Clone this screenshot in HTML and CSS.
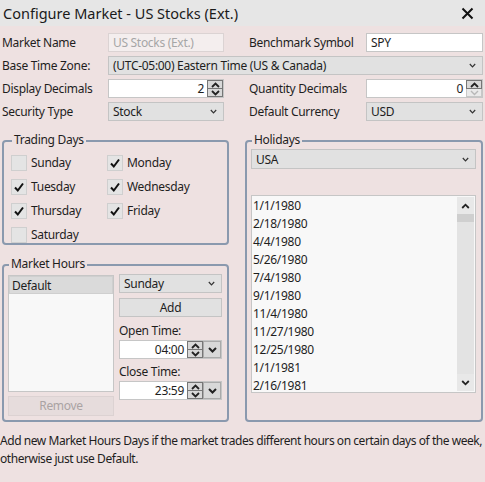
FILE: index.html
```html
<!DOCTYPE html>
<html lang="en">
<head>
    <meta charset="UTF-8">
    <title>Configure Market</title>
    <link rel="stylesheet" href="styles.css">
</head>
<body>

<div class="titlebar">
    <span class="title">Configure Market - US Stocks (Ext.)</span>
    <svg class="close" width="13" height="13" viewBox="0 0 13 13">
        <path d="M1.5 1.5 L11.5 11.5 M11.5 1.5 L1.5 11.5" stroke="#111" stroke-width="2" fill="none"/>
    </svg>
</div>

<div class="settings">
    <span class="lbl">Market Name</span>
    <div class="field text disabled">US Stocks (Ext.)</div>
    <span class="lbl col4">Benchmark Symbol</span>
    <div class="field text">SPY</div>

    <span class="lbl">Base Time Zone:</span>
    <div class="field combo wide">
        <span>(UTC-05:00) Eastern Time (US &amp; Canada)</span>
        <svg class="chev" width="7" height="5" viewBox="0 0 7 5"><path d="M0.8 1 L3.5 3.8 L6.2 1" stroke="#333" stroke-width="1.2" fill="none"/></svg>
    </div>

    <span class="lbl">Display Decimals</span>
    <div class="field num">
        <span class="val">2</span>
        <div class="spin">
            <span class="up"><svg width="9" height="6" viewBox="0 0 9 6"><path d="M1 5 L4.5 1.5 L8 5" stroke="#222" stroke-width="1.8" fill="none"/></svg></span>
            <span class="down"><svg width="9" height="6" viewBox="0 0 9 6"><path d="M1 1 L4.5 4.5 L8 1" stroke="#222" stroke-width="1.8" fill="none"/></svg></span>
        </div>
    </div>
    <span class="lbl col4">Quantity Decimals</span>
    <div class="field num">
        <span class="val">0</span>
        <div class="spin">
            <span class="up"><svg width="9" height="6" viewBox="0 0 9 6"><path d="M1 5 L4.5 1.5 L8 5" stroke="#222" stroke-width="1.8" fill="none"/></svg></span>
            <span class="down off"><svg width="9" height="6" viewBox="0 0 9 6"><path d="M1 1 L4.5 4.5 L8 1" stroke="#b8b8b8" stroke-width="1.4" fill="none"/></svg></span>
        </div>
    </div>

    <span class="lbl">Security Type</span>
    <div class="field combo">
        <span>Stock</span>
        <svg class="chev" width="7" height="5" viewBox="0 0 7 5"><path d="M0.8 1 L3.5 3.8 L6.2 1" stroke="#333" stroke-width="1.2" fill="none"/></svg>
    </div>
    <span class="lbl col4">Default Currency</span>
    <div class="field combo">
        <span>USD</span>
        <svg class="chev" width="7" height="5" viewBox="0 0 7 5"><path d="M0.8 1 L3.5 3.8 L6.2 1" stroke="#333" stroke-width="1.2" fill="none"/></svg>
    </div>
</div>

<div class="groups">
    <div class="left-col">
        <fieldset class="group trading">
            <legend>Trading Days</legend>
            <div class="days">
                <div class="day"><span class="box"></span>Sunday</div>
                <div class="day"><span class="box"><svg width="14" height="14" viewBox="0 0 14 14"><path d="M3 7.5 L5.8 10.5 L11 3.5" stroke="#111" stroke-width="2" fill="none"/></svg></span>Monday</div>
                <div class="day"><span class="box"><svg width="14" height="14" viewBox="0 0 14 14"><path d="M3 7.5 L5.8 10.5 L11 3.5" stroke="#111" stroke-width="2" fill="none"/></svg></span>Tuesday</div>
                <div class="day"><span class="box"><svg width="14" height="14" viewBox="0 0 14 14"><path d="M3 7.5 L5.8 10.5 L11 3.5" stroke="#111" stroke-width="2" fill="none"/></svg></span>Wednesday</div>
                <div class="day"><span class="box"><svg width="14" height="14" viewBox="0 0 14 14"><path d="M3 7.5 L5.8 10.5 L11 3.5" stroke="#111" stroke-width="2" fill="none"/></svg></span>Thursday</div>
                <div class="day"><span class="box"><svg width="14" height="14" viewBox="0 0 14 14"><path d="M3 7.5 L5.8 10.5 L11 3.5" stroke="#111" stroke-width="2" fill="none"/></svg></span>Friday</div>
                <div class="day"><span class="box"></span>Saturday</div>
            </div>
        </fieldset>

        <fieldset class="group hours">
            <legend>Market Hours</legend>
            <div class="hours-body">
                <div class="hours-left">
                    <div class="listbox">
                        <div class="item selected">Default</div>
                    </div>
                    <div class="btn disabled">Remove</div>
                </div>
                <div class="hours-right">
                    <div class="combo">
                        <span>Sunday</span>
                        <svg class="chev" width="7" height="5" viewBox="0 0 7 5"><path d="M0.8 1 L3.5 3.8 L6.2 1" stroke="#333" stroke-width="1.2" fill="none"/></svg>
                    </div>
                    <div class="btn add">Add</div>
                    <div class="time-lbl">Open Time:</div>
                    <div class="time">
                        <span class="val">04:00</span>
                        <div class="spin">
                            <span class="up"><svg width="9" height="6" viewBox="0 0 9 6"><path d="M1 5 L4.5 1.5 L8 5" stroke="#222" stroke-width="1.8" fill="none"/></svg></span>
                            <span class="down"><svg width="9" height="6" viewBox="0 0 9 6"><path d="M1 1 L4.5 4.5 L8 1" stroke="#222" stroke-width="1.8" fill="none"/></svg></span>
                        </div>
                        <span class="drop"><svg width="9" height="6" viewBox="0 0 9 6"><path d="M1 1 L4.5 4.5 L8 1" stroke="#222" stroke-width="2" fill="none"/></svg></span>
                    </div>
                    <div class="time-lbl close-lbl">Close Time:</div>
                    <div class="time">
                        <span class="val">23:59</span>
                        <div class="spin">
                            <span class="up"><svg width="9" height="6" viewBox="0 0 9 6"><path d="M1 5 L4.5 1.5 L8 5" stroke="#222" stroke-width="1.8" fill="none"/></svg></span>
                            <span class="down"><svg width="9" height="6" viewBox="0 0 9 6"><path d="M1 1 L4.5 4.5 L8 1" stroke="#222" stroke-width="1.8" fill="none"/></svg></span>
                        </div>
                        <span class="drop"><svg width="9" height="6" viewBox="0 0 9 6"><path d="M1 1 L4.5 4.5 L8 1" stroke="#222" stroke-width="2" fill="none"/></svg></span>
                    </div>
                </div>
            </div>
        </fieldset>
    </div>

    <fieldset class="group holidays">
        <legend>Holidays</legend>
        <div class="combo">
            <span>USA</span>
            <svg class="chev" width="7" height="5" viewBox="0 0 7 5"><path d="M0.8 1 L3.5 3.8 L6.2 1" stroke="#333" stroke-width="1.2" fill="none"/></svg>
        </div>
        <div class="dates">
            <div class="date-items">
                <div>1/1/1980</div>
                <div>2/18/1980</div>
                <div>4/4/1980</div>
                <div>5/26/1980</div>
                <div>7/4/1980</div>
                <div>9/1/1980</div>
                <div>11/4/1980</div>
                <div>11/27/1980</div>
                <div>12/25/1980</div>
                <div>1/1/1981</div>
                <div>2/16/1981</div>
            </div>
            <div class="scrollbar">
                <span class="arrow"><svg width="9" height="6" viewBox="0 0 9 6"><path d="M1.2 5 L4.5 1.7 L7.8 5" stroke="#222" stroke-width="1.8" fill="none"/></svg></span>
                <span class="thumb"></span>
                <span class="track"></span>
                <span class="arrow"><svg width="9" height="6" viewBox="0 0 9 6"><path d="M1.2 1 L4.5 4.3 L7.8 1" stroke="#222" stroke-width="1.8" fill="none"/></svg></span>
            </div>
        </div>
    </fieldset>
</div>

<p class="note">Add new Market Hours Days if the market trades different hours on certain days of the week, otherwise just use Default.</p>

</body>
</html>
```

FILE: styles.css
```css
* {
    box-sizing: border-box;
}

body {
    margin: 0;
    width: 485px;
    height: 482px;
    overflow: hidden;
    background-color: #eee1e1;
    font-family: "Noto Sans", sans-serif;
    font-size: 12px;
    letter-spacing: -0.3px;
    color: #1e1e1e;
}

.titlebar {
    height: 26px;
    background-color: #e6e6e6;
    display: flex;
    align-items: center;
    justify-content: space-between;
    padding: 0 11px 0 3px;
}

.title {
    font-size: 14.5px;
    letter-spacing: 0;
    color: #1a1a1a;
}

.settings {
    display: grid;
    grid-template-columns: 106px 116px 25px 117px 117px;
    grid-auto-rows: 19px;
    row-gap: 4px;
    margin: 7px 2px 0;
    align-items: center;
}

.lbl {
    white-space: nowrap;
}

.col4 {
    grid-column: 4;
}

.field {
    height: 19px;
}

.text {
    background: #fff;
    border: 1px solid #c6c6c6;
    padding: 0 4px;
    line-height: 17px;
}

.text.disabled {
    background: #f4eeee;
    border-color: #dbd3d3;
    color: #a6a6a6;
}

.combo {
    height: 19px;
    background: #e1e1e1;
    border: 1px solid #c4c4c4;
    display: flex;
    align-items: center;
    justify-content: space-between;
    padding: 0 6px 0 4px;
    white-space: nowrap;
}

.wide {
    grid-column: 2 / 6;
}

.num,
.time {
    display: flex;
    background: #fff;
    border: 1px solid #c6c6c6;
}

.num .val,
.time .val {
    flex: 1;
    text-align: right;
    padding-right: 3px;
    line-height: 17px;
}

.spin {
    width: 16px;
    display: flex;
    flex-direction: column;
}

.spin span {
    flex: 1;
    background: #d8d8d8;
    border: 1px solid #767676;
    display: flex;
    align-items: center;
    justify-content: center;
}

.spin .down {
    border-top: none;
}

.spin .off {
    background: #eaeaea;
    border-color: #c8c8c8;
}

.groups {
    display: flex;
    justify-content: space-between;
    margin: 12px 2px 0;
}

.left-col {
    width: 227px;
    display: flex;
    flex-direction: column;
}

.group {
    margin: 0;
    border: 2px solid #8a99ae;
    border-radius: 4px;
    padding: 0;
    min-width: 0;
}

legend {
    margin-left: 1px;
    padding: 0 2px 2px;
    line-height: 14px;
}

.trading {
    padding: 6px 0 0 7px;
}

.days {
    display: grid;
    grid-template-columns: 96px 110px;
    grid-auto-rows: 16px;
    row-gap: 8px;
}

.day {
    display: flex;
    align-items: center;
    gap: 4px;
    line-height: 16px;
}

.box {
    width: 16px;
    height: 16px;
    background: #e4e4e4;
    border: 1px solid #cfcfcf;
    display: flex;
    align-items: center;
    justify-content: center;
}

.hours {
    margin-top: 12px;
    padding: 0 5px 4px 4px;
}

.hours-body {
    display: flex;
    justify-content: space-between;
}

.hours-left {
    width: 106px;
    display: flex;
    flex-direction: column;
    gap: 4px;
    padding-top: 2px;
}

.listbox {
    height: 117px;
    background: #f8f8f8;
    border: 1px solid #c6c6c6;
}

.item {
    height: 18px;
    line-height: 17px;
    padding-left: 2px;
}

.item.selected {
    background: #dadada;
    border: 1px solid #cfcfcf;
}

.btn {
    height: 19px;
    line-height: 17px;
    text-align: center;
    background: #e1e1e1;
    border: 1px solid #c4c4c4;
}

.btn.disabled {
    height: 20px;
    background: #e6dcdc;
    border-color: #dcd2d2;
    color: #aaa3a3;
}

.hours-right {
    width: 103px;
    display: flex;
    flex-direction: column;
    padding-top: 1px;
}

.btn.add {
    margin-top: 5px;
}

.time-lbl {
    margin-top: 4px;
    line-height: 19px;
}

.close-lbl {
    margin-top: 3px;
}

.time {
    height: 19px;
}

.time .drop {
    width: 18px;
    background: #d8d8d8;
    border: 1px solid #aaa;
    display: flex;
    align-items: center;
    justify-content: center;
}

.holidays {
    width: 238px;
    padding: 0 5px 27px 4px;
}

.holidays .combo {
    height: 20px;
}

.dates {
    margin-top: 26px;
    height: 198px;
    display: flex;
    background: #f8f8f8;
    border: 1px solid #c6c6c6;
}

.date-items {
    flex: 1;
    padding-top: 1px;
    padding-left: 1px;
}

.date-items div {
    height: 18px;
    line-height: 18px;
}

.scrollbar {
    width: 17px;
    margin: 1px 1px 1px 0;
    display: flex;
    flex-direction: column;
    background: #e3e3e3;
}

.scrollbar .arrow {
    height: 17px;
    display: flex;
    align-items: center;
    justify-content: center;
    background: #e8e8e8;
}

.scrollbar .thumb {
    height: 8px;
    background: #cfcfcf;
}

.scrollbar .track {
    flex: 1;
}

.note {
    margin: 10px 0 0;
    line-height: 18px;
    font-size: 12px;
    letter-spacing: -0.45px;
}
```
